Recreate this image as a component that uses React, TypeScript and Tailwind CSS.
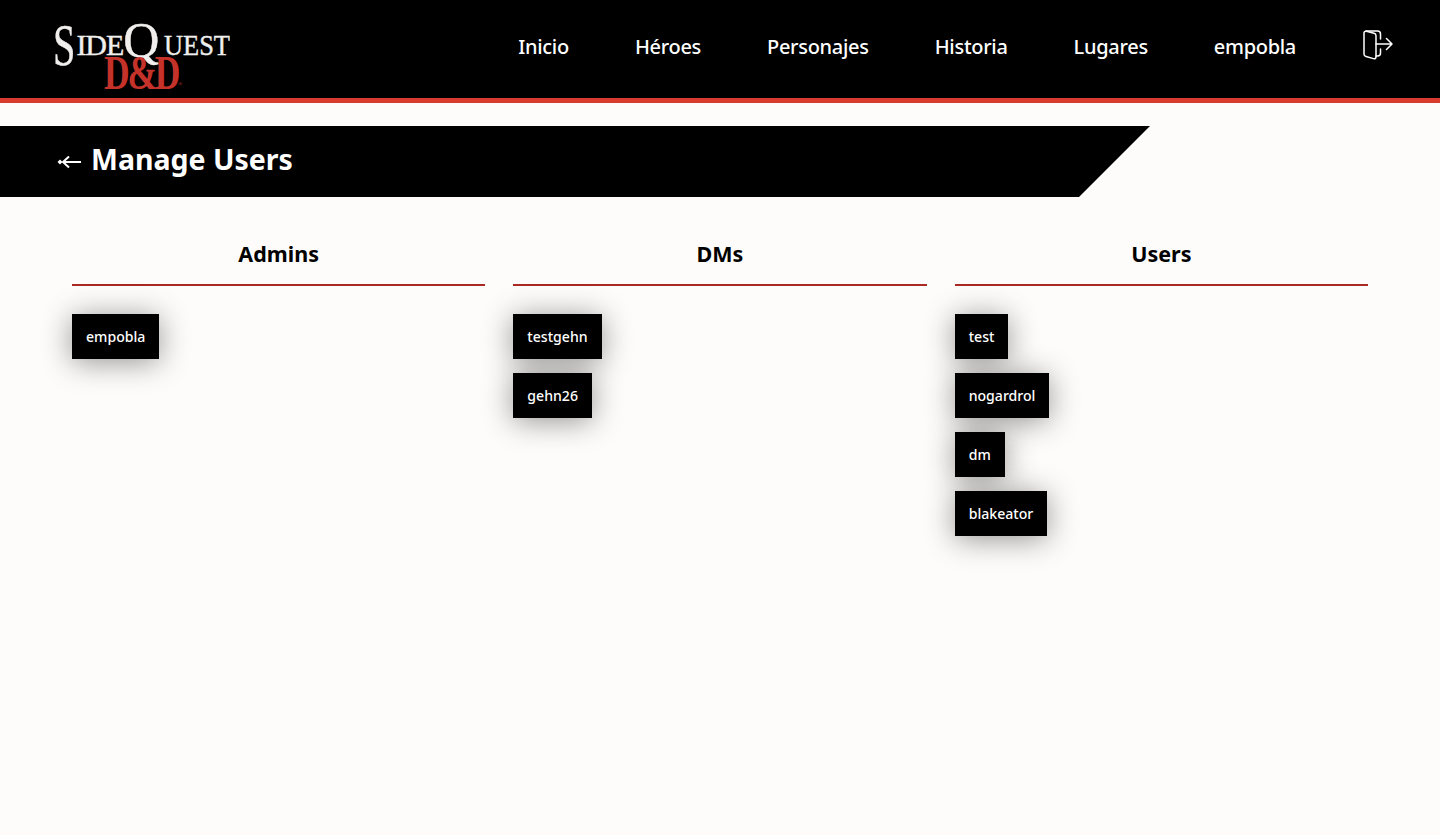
const font = { fontFamily: '"Noto Sans", sans-serif' };

const columns = [
  { title: "Admins", users: ["empobla"] },
  { title: "DMs", users: ["testgehn", "gehn26"] },
  { title: "Users", users: ["test", "nogardrol", "dm", "blakeator"] },
];

const links = ["Inicio", "Héroes", "Personajes", "Historia", "Lugares", "empobla"];

const Logo = () => (
  <div className="relative w-[178px] h-[72px] font-['Liberation_Serif',serif] leading-none whitespace-nowrap text-[#f0efed]">
    <div className="flex items-center h-[64px] [-webkit-text-stroke:0.4px_#f0efed]">
      <span className="text-[60px] origin-left scale-x-[0.67] -mr-[10px]">S</span>
      <span className="text-[30px] tracking-[-1px]">IDE</span>
      <span className="text-[50px] -mt-[10px]">Q</span>
      <span className="text-[30px] origin-left scale-x-[0.88] ml-[5px]">UEST</span>
    </div>
    {/* sits over the tail of the Q */}
    <span className="absolute left-[51px] top-[36px] text-[48px] font-bold tracking-[-3px] text-[#c5322a] origin-left scale-x-[0.74]">
      D&amp;D<sup className="text-[7px] font-normal tracking-normal">®</sup>
    </span>
  </div>
);

export default function App() {
  return (
    <div className="min-h-screen bg-[#fdfcfa]" style={font}>
      <header className="h-[103px] bg-black border-b-[5px] border-[#d93a2e] flex items-center justify-between pl-[53px] pr-[47px]">
        <Logo />
        <nav className="flex items-center gap-[66px] text-white text-[20px] font-medium">
          {links.map((l) => (
            <a key={l} className="-mt-[4px] tracking-[-0.3px]">{l}</a>
          ))}
          <svg width="30" height="30" viewBox="0 0 30 30" fill="none" stroke="white" strokeWidth="1.5" strokeLinecap="round" strokeLinejoin="round" className="-mt-[9px] ml-[1px]">
            <path d="M1 3 C1 1.8 2 1 3.5 1.3 L11 3.3 C12.2 3.6 13 4.6 13 5.8 V27 C13 28.5 12 29 10.5 28.6 L3 26.5 C1.8 26.2 1 25.2 1 24 Z" />
            <path d="M3 1 H14.5 C16.5 1 17.5 2 17.5 4 V9" />
            <path d="M17.5 19 V23 C17.5 25 16.5 26 14.5 26 H13" />
            <path d="M13 14 H29 M23.5 8.5 L29 14 L23.5 19.5" />
          </svg>
        </nav>
      </header>

      <div className="mt-[23px] h-[71px] w-[1150px] bg-black [clip-path:polygon(0_0,100%_0,1079px_100%,0_100%)] flex items-center pl-[57px] gap-[10px] text-white">
        <svg width="24" height="14" viewBox="0 0 24 14" fill="none" stroke="white" strokeWidth="2" className="mt-[1px]">
          <path d="M6 7 H24 M12 1.5 L6 7 L12 12.5" />
          <path d="M0.5 7 L3 4.5 L5.5 7 L3 9.5 Z" fill="white" stroke="none" />
        </svg>
        <h1 className="text-[28.5px] font-bold -mt-[4px]">Manage Users</h1>
      </div>

      <main className="grid grid-cols-3 gap-[28px] px-[72px] mt-[37px]">
        {columns.map((c) => (
          <section key={c.title}>
            <h2 className="h-[52px] border-b-2 border-[#a82a22] text-center text-[21.5px] font-bold text-black leading-[40px]">
              {c.title}
            </h2>
            <div className="flex flex-col items-start gap-[14px] mt-[28px]">
              {c.users.map((u) => (
                <button key={u} className="h-[45px] px-[14px] bg-black text-white text-[14.1px] font-medium shadow-[0_3px_30px_rgba(0,0,0,0.42)]">
                  {u}
                </button>
              ))}
            </div>
          </section>
        ))}
      </main>
    </div>
  );
}
